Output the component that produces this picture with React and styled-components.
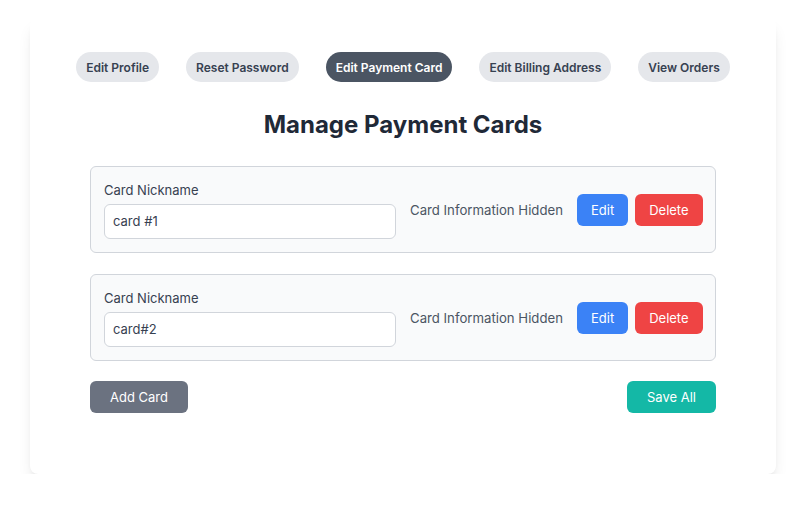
import React from 'react';
import styled, { createGlobalStyle } from 'styled-components';

const GlobalStyle = createGlobalStyle`
  body {
    margin: 0;
    background: #ffffff;
    font-family: Inter, "Noto Sans", "Liberation Sans", sans-serif;
  }
`;

const Page = styled.div`
  padding: 18px 32px 0 30px;
`;

const Panel = styled.div`
  width: 746px;
  height: 456px;
  box-sizing: border-box;
  background: #ffffff;
  border-radius: 8px;
  box-shadow: 0 10px 15px -3px rgba(0, 0, 0, 0.1), 0 4px 6px -4px rgba(0, 0, 0, 0.1);
  padding: 34px 46px 0;
`;

const Tabs = styled.nav`
  display: flex;
  justify-content: center;
  gap: 27px;
`;

const Tab = styled.button`
  height: 30px;
  padding: 0 10px;
  border: none;
  border-radius: 999px;
  white-space: nowrap;
  font-family: inherit;
  font-size: 12px;
  font-weight: 600;
  background: ${(p) => (p.$active ? '#4b5563' : '#e5e7eb')};
  color: ${(p) => (p.$active ? '#ffffff' : '#374151')};
  cursor: pointer;
`;

const Title = styled.h1`
  margin: 27px 0 25px;
  text-align: center;
  font-size: 24px;
  font-weight: 700;
  color: #1f2937;
  line-height: 32px;
`;

const Content = styled.div`
  margin: 0 14px;
`;

const List = styled.div`
  display: flex;
  flex-direction: column;
  gap: 21px;
`;

const CardRow = styled.div`
  display: flex;
  align-items: center;
  height: 87px;
  box-sizing: border-box;
  padding: 0 13px;
  background: #f9fafb;
  border: 1px solid #d1d5db;
  border-radius: 6px;
`;

const Field = styled.div`
  display: flex;
  flex-direction: column;
  flex-shrink: 0;
  gap: 5px;
  width: 292px;
`;

const Label = styled.label`
  font-size: 13px;
  color: #374151;
  line-height: 18px;
`;

const Input = styled.input`
  height: 35px;
  box-sizing: border-box;
  border: 1px solid #d1d5db;
  border-radius: 6px;
  padding: 0 8px;
  font-family: inherit;
  font-size: 13px;
  color: #374151;
  background: #ffffff;
  outline: none;
`;

const Hidden = styled.span`
  margin-left: 14px;
  font-size: 13.2px;
  color: #4b5563;
  white-space: nowrap;
`;

const Button = styled.button`
  height: 32px;
  padding: 0 ${(p) => p.$px || 14}px;
  border: none;
  border-radius: 6px;
  font-family: inherit;
  font-size: 13px;
  color: #ffffff;
  background: ${(p) => p.$bg};
  cursor: pointer;
`;

const Actions = styled.div`
  display: flex;
  gap: 7px;
  margin-left: 14px;
`;

const Footer = styled.div`
  display: flex;
  justify-content: space-between;
  margin-top: 20px;
`;

const tabs = ['Edit Profile', 'Reset Password', 'Edit Payment Card', 'Edit Billing Address', 'View Orders'];
const cards = ['card #1', 'card#2'];

export default function App() {
  return (
    <Page>
      <GlobalStyle />
      <Panel>
        <Tabs>
          {tabs.map((t) => (
            <Tab key={t} $active={t === 'Edit Payment Card'}>{t}</Tab>
          ))}
        </Tabs>
        <Title>Manage Payment Cards</Title>
        <Content>
          <List>
            {cards.map((c) => (
              <CardRow key={c}>
                <Field>
                  <Label>Card Nickname</Label>
                  <Input defaultValue={c} />
                </Field>
                <Hidden>Card Information Hidden</Hidden>
                <Actions>
                  <Button $bg="#3b82f6">Edit</Button>
                  <Button $bg="#ef4444">Delete</Button>
                </Actions>
              </CardRow>
            ))}
          </List>
          <Footer>
            <Button $bg="#6b7280" $px={20}>Add Card</Button>
            <Button $bg="#14b8a6" $px={20}>Save All</Button>
          </Footer>
        </Content>
      </Panel>
    </Page>
  );
}
